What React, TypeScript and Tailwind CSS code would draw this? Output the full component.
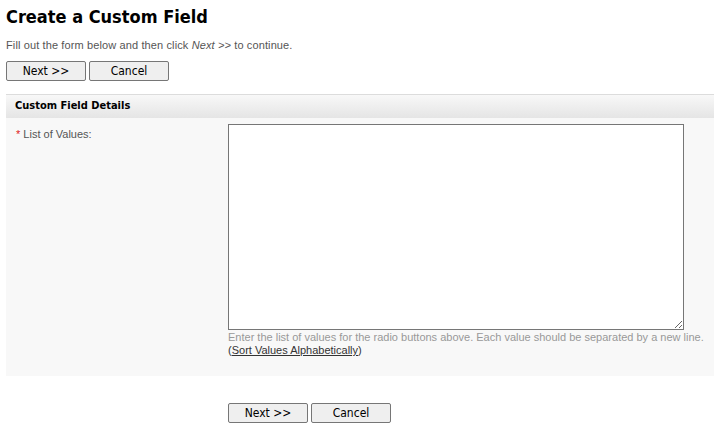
import React from "react";

const titleFont = { fontFamily: "Tahoma, 'DejaVu Sans Condensed', 'Liberation Sans', sans-serif" };
const bodyFont = { fontFamily: "Tahoma, 'Liberation Sans', Arial, sans-serif" };

const FormButton = ({ label }: { label: string }) => (
  <button
    type="button"
    className="h-[20px] w-[80px] rounded-[2px] border border-[#767676] bg-[#efefef] text-[12px] leading-none text-black"
    style={titleFont}
  >
    {label}
  </button>
);

const App = () => {
  return (
    <div className="min-h-[431px] overflow-hidden bg-white text-[11px] text-[#333]" style={bodyFont}>
      <div className="px-[6px] pt-[5px]">
        <h1 className="text-[18px] font-bold leading-[24px] text-black" style={titleFont}>
          Create a Custom Field
        </h1>
        <p className="mt-[9px] leading-[14px] tracking-[0.12px] text-[#555]">
          Fill out the form below and then click <em>Next &gt;&gt;</em> to continue.
        </p>
        <div className="mt-[9px] flex gap-[3px]">
          <FormButton label="Next >>" />
          <FormButton label="Cancel" />
        </div>
      </div>

      <div className="ml-[6px] mt-[13px] border-t border-[#dcdcdc]">
        <div className="flex h-[23px] items-center bg-gradient-to-b from-[#f8f8f8] to-[#e5e5e5] px-[9px]">
          <span className="font-bold text-black" style={titleFont}>Custom Field Details</span>
        </div>
        <div className="flex bg-[#f8f8f8] pb-[19px] pt-[6px]">
          <div className="w-[222px] shrink-0 pl-[10px] pt-[2px] text-[#555]">
            <span className="text-[#e02020]">*</span> List of Values:
          </div>
          <div className="flex min-w-0 flex-1 flex-col">
            <textarea className="block h-[206px] w-[456px] border border-[#767676] bg-white" />
            <div className="mt-[1px] whitespace-nowrap leading-[13px] text-[#999]">
              Enter the list of values for the radio buttons above. Each value should be separated by a new line.
            </div>
            <div className="leading-[13px] text-[#333]">
              (<span className="underline">Sort Values Alphabetically</span>)
            </div>
          </div>
        </div>
      </div>

      <div className="mt-[27px] flex gap-[3px] pl-[228px]">
        <FormButton label="Next >>" />
        <FormButton label="Cancel" />
      </div>
    </div>
  );
};

export default App;
